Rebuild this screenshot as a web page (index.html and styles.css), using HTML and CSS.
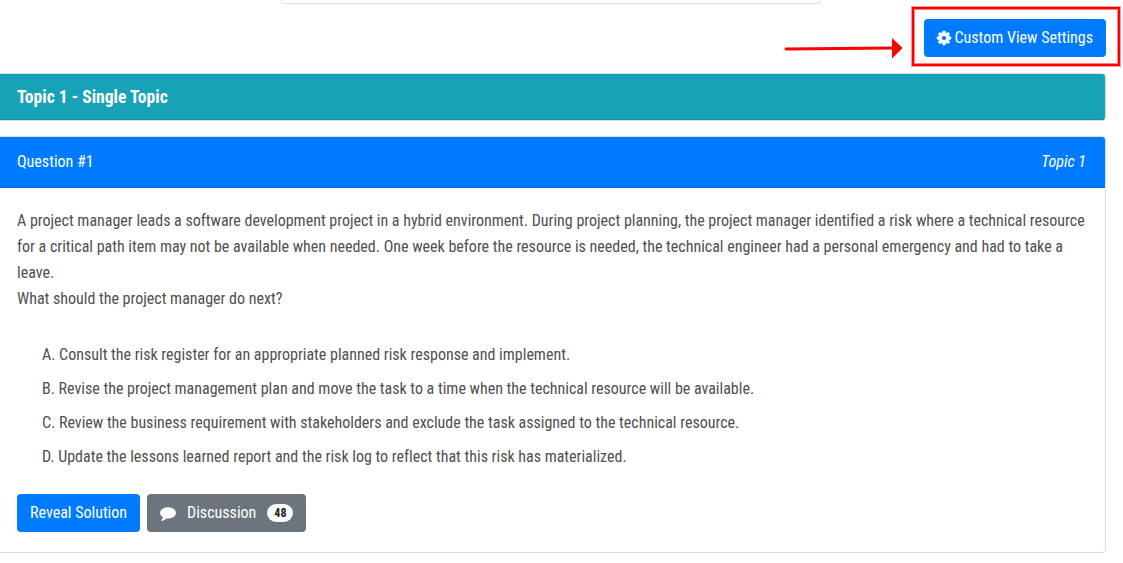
FILE: index.html
```html
<!DOCTYPE html>
<html lang="en">
<head>
    <meta charset="UTF-8">
    <meta name="viewport" content="width=device-width, initial-scale=1.0">
    <title>Topic 1 - Question #1</title>
    <link rel="stylesheet" href="styles.css">
</head>
<body>
    <div class="top-box"></div>

    <div class="toolbar">
        <svg class="arrow" width="120" height="24" viewBox="0 0 120 24">
            <path d="M2 13 L110 12" stroke="#f00" stroke-width="2.8" stroke-linecap="round"/>
            <path d="M108 2 L118.500 12 L108 22.500 Z" fill="#f00"/>
        </svg>
        <div class="highlight">
            <button class="btn btn-primary btn-settings">
                <svg class="icon-cog" width="14" height="14" viewBox="0 0 1536 1536">
                    <path fill="#fff" stroke="#fff" stroke-width="50" d="M1024 768q0-106-75-181t-181-75-181 75-75 181 75 181 181 75 181-75 75-181zm512-109v222q0 12-8 23t-20 13l-185 28q-19 54-39 91 35 50 107 138 10 12 10 25t-9 23q-27 37-99 108t-94 71q-12 0-26-9l-138-108q-44 23-91 38-16 136-29 186-7 28-36 28H657q-14 0-24.500-8.500T621 1506l-28-184q-49-16-90-37l-141 107q-10 9-25 9-14 0-25-11-126-114-165-168-7-10-7-23 0-12 8-23 15-21 51-66.500t54-70.500q-27-50-41-99L29 913q-13-2-21-12.500T0 877V655q0-12 8-23t19-13l186-28q14-46 39-92-40-57-107-138-10-12-10-24 0-10 9-23 26-36 98.500-107.500T337 135q13 0 26 10l138 107q44-23 91-38 16-136 29-186 7-28 36-28h222q14 0 24.500 8.500T915 30l28 184q49 16 90 37l142-107q9-9 24-9 13 0 25 10 129 119 165 170 7 8 7 22 0 12-8 23-15 21-51 66.500t-54 70.500q26 50 41 98l183 28q13 2 21 12.500t8 23.500z"/>
                </svg>
                <span>Custom View Settings</span>
            </button>
        </div>
    </div>

    <div class="card topic-card">
        <div class="topic-header">Topic 1 - Single Topic</div>
    </div>

    <div class="card question-card">
        <div class="question-header">
            <span>Question #1</span>
            <span class="topic-label">Topic 1</span>
        </div>
        <div class="question-body">
            <p class="question-text">
                A project manager leads a software development project in a hybrid environment. During project planning, the project manager identified a risk where a technical resource<br>
                for a critical path item may not be available when needed. One week before the resource is needed, the technical engineer had a personal emergency and had to take a<br>
                leave.<br>
                What should the project manager do next?
            </p>
            <ul class="choices">
                <li>A. Consult the risk register for an appropriate planned risk response and implement.</li>
                <li>B. Revise the project management plan and move the task to a time when the technical resource will be available.</li>
                <li>C. Review the business requirement with stakeholders and exclude the task assigned to the technical resource.</li>
                <li>D. Update the lessons learned report and the risk log to reflect that this risk has materialized.</li>
            </ul>
            <div class="actions">
                <button class="btn btn-primary">Reveal Solution</button>
                <button class="btn btn-secondary">
                    <svg class="icon-comment" width="16" height="14" viewBox="0 0 1792 1536">
                        <path fill="#fff" d="M1792 640q0 174-120 321.500t-326 233-450 85.500q-70 0-145-8-198 175-460 242-49 14-114 22-17 2-30.500-9t-17.500-29v-1q-3-4-.5-12t2-10 4.500-9.500l6-9 7-8.500 8-9q7-8 31-34.500t34.500-38 31-39.500 32.500-51 27-59 26-76q-157-89-247.500-220T0 640q0-174 120-321.500t326-233T896 0t450 85.500 326 233T1792 640z"/>
                    </svg>
                    <span>Discussion</span>
                    <span class="badge">48</span>
                </button>
            </div>
        </div>
    </div>
</body>
</html>
```

FILE: styles.css
```css
* {
    box-sizing: border-box;
}
body {
    font-family: "Roboto Condensed", Roboto, sans-serif;
    font-stretch: 75%;
    font-size: 16px;
    line-height: 24px;
    color: #505050;
    background-color: #fff;
    margin: 0;
    padding: 0;
    overflow: hidden;
}
.top-box {
    width: 540px;
    height: 4px;
    margin-left: 281px;
    border: 1px solid #dfdfdf;
    border-top: none;
    border-radius: 0 0 4px 4px;
}
.toolbar {
    display: flex;
    justify-content: flex-end;
    height: 69px;
    padding: 3px 3px 0 0;
}
.arrow {
    margin: 29px 8px 0 0;
}
.highlight {
    width: 208px;
    height: 59px;
    border: 2px solid #f00;
    box-shadow: 0 0 0 1px rgba(255, 0, 0, 0.4), inset 0 0 0 1px rgba(255, 0, 0, 0.5);
    padding: 10px 0 0 10px;
}
.btn {
    display: flex;
    align-items: center;
    height: 38px;
    padding: 0 13px;
    border: none;
    border-radius: 4px;
    color: #fff;
    font-family: inherit;
    font-stretch: inherit;
    font-size: 16px;
    line-height: 24px;
    white-space: nowrap;
}
.btn-primary {
    background-color: #007bff;
}
.btn-secondary {
    background-color: #6c757d;
}
.btn-settings {
    width: 182px;
}
.icon-cog {
    margin-right: 3.500px;
    overflow: visible;
}
.card {
    width: 1106px;
    border: 1px solid #dfdfdf;
    border-left: none;
    border-radius: 0 4px 4px 0;
    overflow: hidden;
}
.topic-card {
    height: 48px;
    margin-bottom: 15px;
}
.topic-header {
    height: 46px;
    padding: 11px 17px;
    background-color: #17a2b8;
    border-bottom: 1px solid #148ea1;
    color: #fff;
    font-size: 17.600px;
    font-weight: bold;
}
.question-card {
    height: 417px;
}
.question-header {
    display: flex;
    justify-content: space-between;
    height: 51px;
    padding: 13px 19px 12px 17px;
    background-color: #007bff;
    border-bottom: 1px solid #006cdf;
    color: #fff;
}
.topic-label {
    font-style: italic;
}
.question-body {
    padding: 20px 17px;
}
.question-text {
    margin: 0 0 26px;
    line-height: 26px;
    letter-spacing: -0.005px;
    white-space: nowrap;
}
.choices {
    list-style: none;
    margin: 0 0 20px;
    padding: 0 0 0 25px;
    letter-spacing: -0.005px;
}
.choices li {
    height: 34px;
    line-height: 34px;
}
.actions {
    display: flex;
    gap: 7px;
}
.icon-comment {
    margin: 1px 11px 0 0;
}
.badge {
    margin-left: 11px;
    padding: 3px 7px;
    border-radius: 10px;
    background-color: #f8f9fa;
    color: #212529;
    font-size: 12px;
    font-weight: bold;
    line-height: 12px;
}
```
